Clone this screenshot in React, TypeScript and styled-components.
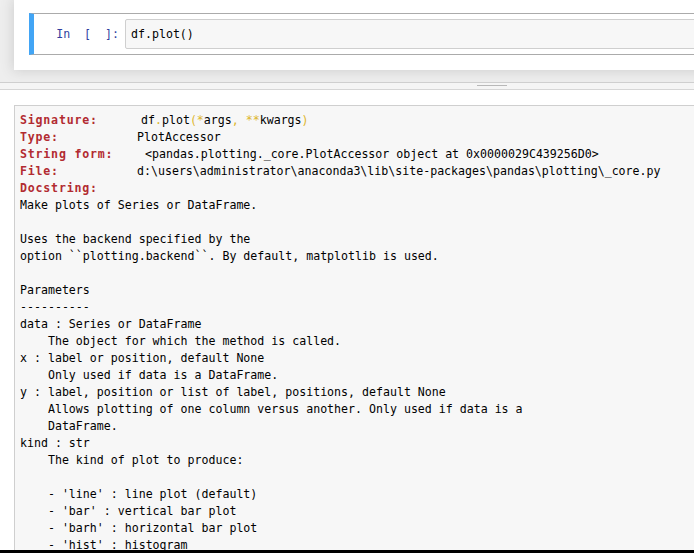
import React from 'react';
import styled, { createGlobalStyle } from 'styled-components';

const Global = createGlobalStyle`
  html, body { margin: 0; padding: 0; }
  body {
    width: 694px;
    height: 553px;
    overflow: hidden;
    background: #eeeeee;
  }
`;

const Page = styled.div`
  width: 694px;
  height: 553px;
  display: flex;
  flex-direction: column;
  overflow: hidden;
  font-family: "DejaVu Sans Mono", "Liberation Mono", monospace;
  font-size: 11.6px;
  color: #000;
`;

const Site = styled.div`
  flex: none;
  height: 82px;
  box-sizing: border-box;
  padding-left: 14px;
  background: #eeeeee;
  overflow: hidden;
`;

const NotebookPanel = styled.div`
  width: 740px;
  height: 70px;
  box-sizing: border-box;
  padding: 13px 0 0 15px;
  background: #ffffff;
  box-shadow: 0 0 12px 1px rgba(87, 87, 87, 0.2);
`;

const Cell = styled.div`
  display: flex;
  height: 42px;
  box-sizing: border-box;
  border: 1px solid #ababab;
  border-left: 5px solid #42a5f5;
  padding: 5px 0 5px 0;
`;

const Prompt = styled.div`
  flex: none;
  width: 91px;
  box-sizing: border-box;
  padding-right: 6px;
  text-align: right;
  white-space: pre;
  color: #303f9f;
  line-height: 30px;
`;

const InputArea = styled.div`
  flex: 1;
  box-sizing: border-box;
  border: 1px solid #cfcfcf;
  border-radius: 2px;
  background: #f7f7f7;
  padding-left: 5px;
  line-height: 28px;
  white-space: pre;
`;

const PagerBar = styled.div`
  flex: none;
  height: 8px;
  box-sizing: border-box;
  border-top: 1px solid #cfcfcf;
  border-bottom: 1px solid #d6d6d6;
  background: #f5f5f5;
  display: flex;
  align-items: flex-start;
  padding: 2px 0 0 477px;
`;

const Handle = styled.div`
  width: 30px;
  height: 1px;
  background: #b8b8b8;
`;

const PagerBody = styled.div`
  flex: 1;
  min-height: 0;
  display: flex;
  box-sizing: border-box;
  padding: 15px 0 0 14px;
  background: #ffffff;
  overflow: hidden;
`;

const PagerBox = styled.div`
  flex: 1;
  margin-right: -20px;
  box-sizing: border-box;
  border-top: 1px solid #cfcfcf;
  border-left: 1px solid #cfcfcf;
  background: #f7f7f7;
  padding: 6px 0 0 5px;
  overflow: hidden;
`;

const Line = styled.div`
  height: 17px;
  line-height: 17px;
  white-space: pre;
`;

const Label = styled.span<{ $w?: number }>`
  display: inline-block;
  width: ${(p) => (p.$w ? `${p.$w}px` : 'auto')};
  font-weight: bold;
  letter-spacing: 0.8px;
  color: #b22b31;
`;

const Punct = styled.span`
  color: #ddb62b;
`;

const DocText = styled.pre`
  margin: 0;
  font: inherit;
  line-height: 17px;
  white-space: pre;
`;

const BottomBar = styled.div`
  flex: none;
  height: 3px;
  background: #000000;
`;

const docstring = `Make plots of Series or DataFrame.

Uses the backend specified by the
option \`\`plotting.backend\`\`. By default, matplotlib is used.

Parameters
----------
data : Series or DataFrame
    The object for which the method is called.
x : label or position, default None
    Only used if data is a DataFrame.
y : label, position or list of label, positions, default None
    Allows plotting of one column versus another. Only used if data is a
    DataFrame.
kind : str
    The kind of plot to produce:

    - 'line' : line plot (default)
    - 'bar' : vertical bar plot
    - 'barh' : horizontal bar plot
    - 'hist' : histogram
    - 'box' : boxplot
    - 'kde' : Kernel Density Estimation plot`;

export default function App() {
  return (
    <>
      <Global />
      <Page>
        <Site>
          <NotebookPanel>
            <Cell>
              <Prompt>{'In  [  ]:'}</Prompt>
              <InputArea>df.plot()</InputArea>
            </Cell>
          </NotebookPanel>
        </Site>
        <PagerBar>
          <Handle />
        </PagerBar>
        <PagerBody>
          <PagerBox>
            <Line>
              <Label $w={121}>Signature:</Label>
              df<Punct>.</Punct>plot<Punct>(*</Punct>args<Punct>,</Punct> <Punct>**</Punct>kwargs<Punct>)</Punct>
            </Line>
            <Line>
              <Label $w={117}>Type:</Label>PlotAccessor
            </Line>
            <Line>
              <Label $w={125}>String form:</Label>
              {'<pandas.plotting._core.PlotAccessor object at 0x0000029C439256D0>'}
            </Line>
            <Line>
              <Label $w={117}>File:</Label>
              {'d:\\users\\administrator\\anaconda3\\lib\\site-packages\\pandas\\plotting\\_core.py'}
            </Line>
            <Line>
              <Label>Docstring:</Label>
            </Line>
            <DocText>{docstring}</DocText>
          </PagerBox>
        </PagerBody>
        <BottomBar />
      </Page>
    </>
  );
}
